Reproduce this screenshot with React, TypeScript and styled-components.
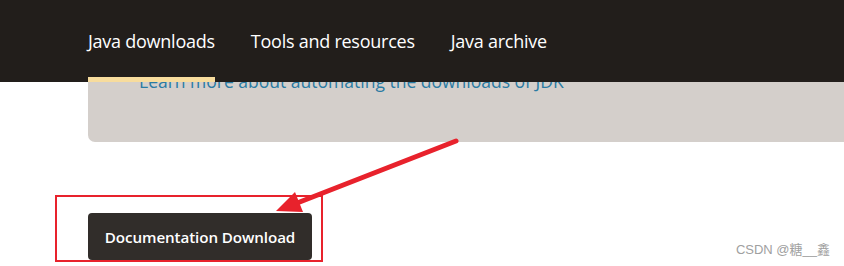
import styled, { createGlobalStyle } from "styled-components";

const Global = createGlobalStyle`
  html, body {
    margin: 0;
    padding: 0;
    background: #ffffff;
  }
  body {
    font-family: "Open Sans", "Noto Sans", sans-serif;
    overflow: hidden;
  }
`;

const Page = styled.div`
  position: relative;
  width: 844px;
  height: 266px;
  overflow: hidden;
  background: #fff;
`;

const Header = styled.nav`
  position: absolute;
  top: 0;
  left: 0;
  right: 0;
  z-index: 2;
  height: 82px;
  background: #221e1b;
  display: flex;
  align-items: stretch;
  gap: 36px;
  padding-left: 88px;
`;

const NavItem = styled.a<{ $active?: boolean }>`
  position: relative;
  display: flex;
  align-items: center;
  padding-bottom: 1px;
  color: #ffffff;
  font-size: 18px;
  letter-spacing: -0.25px;
  text-decoration: none;
  white-space: nowrap;

  &::after {
    content: "";
    display: ${(p) => (p.$active ? "block" : "none")};
    position: absolute;
    left: 0;
    right: 0;
    bottom: 0;
    height: 5px;
    background: #f7dc9d;
  }
`;

const Card = styled.div`
  margin-left: 88px;
  height: 142px;
  box-sizing: border-box;
  padding: 69px 0 0 51px;
  background: #d4cfcb;
  border-bottom-left-radius: 7px;
`;

const CardLink = styled.a`
  display: block;
  font-size: 17.5px;
  line-height: 24px;
  color: #2a7ba3;
  text-decoration: none;
  white-space: nowrap;
`;

const Highlight = styled.div`
  margin: 53px 0 0 55px;
  width: 268px;
  box-sizing: border-box;
  border: 2px solid #e8222c;
  padding: 16px 9px 0 31px;
`;

const Button = styled.button`
  display: flex;
  align-items: center;
  justify-content: center;
  width: 224px;
  height: 47px;
  border: none;
  border-radius: 4px;
  background: #312d2a;
  color: #ffffff;
  font-family: "Open Sans", "Noto Sans", sans-serif;
  font-size: 15.2px;
  font-weight: 600;
  letter-spacing: -0.1px;
  cursor: pointer;
`;

const Arrow = styled.svg`
  position: absolute;
  left: 0;
  top: 0;
  pointer-events: none;
`;

const Watermark = styled.span`
  position: absolute;
  right: 14px;
  bottom: 8px;
  font-family: "Liberation Sans", "Noto Sans CJK SC", sans-serif;
  font-size: 13px;
  color: #a0a0a0;
`;

export default function App() {
  return (
    <>
      <Global />
      <Page>
        <Header>
          <NavItem $active>Java downloads</NavItem>
          <NavItem>Tools and resources</NavItem>
          <NavItem>Java archive</NavItem>
        </Header>
        <Card>
          <CardLink>Learn more about automating the downloads of JDK</CardLink>
        </Card>
        <Highlight>
          <Button>Documentation Download</Button>
        </Highlight>
        <Arrow width="844" height="266" viewBox="0 0 844 266">
          <line
            x1="456"
            y1="141"
            x2="292"
            y2="205"
            stroke="#e8222c"
            strokeWidth="5"
            strokeLinecap="round"
          />
          <polygon points="276,211 295,192 303,212" fill="#e8222c" />
        </Arrow>
        <Watermark>CSDN @糖__鑫</Watermark>
      </Page>
    </>
  );
}
